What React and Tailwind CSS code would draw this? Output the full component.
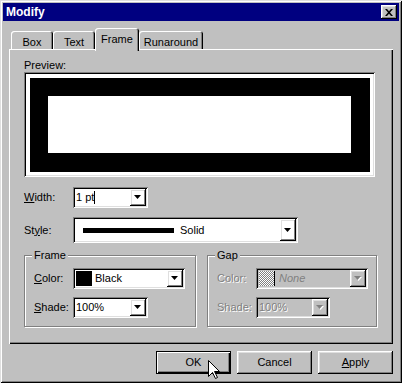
const raised =
  "shadow-[inset_-1px_-1px_0_#000,inset_1px_1px_0_#fff,inset_-2px_-2px_0_#808080,inset_2px_2px_0_#dfdfdf]";
const sunken =
  "shadow-[inset_1px_1px_0_#808080,inset_-1px_-1px_0_#fff,inset_2px_2px_0_#000,inset_-2px_-2px_0_#dfdfdf]";

const Arrow = ({ disabled }) => (
  <svg width="8" height="5" viewBox="0 0 8 5" className="overflow-visible">
    {disabled && <polygon points="1,1 8,1 4.5,5" fill="#fff" />}
    <polygon points="0,0 7,0 3.5,4" fill={disabled ? "#808080" : "#000"} />
  </svg>
);

const Combo = ({ className, disabled, children }) => (
  <div
    className={
      "flex p-[2px] " +
      sunken +
      " " +
      (disabled ? "bg-[#c0c0c0] " : "bg-white ") +
      className
    }
  >
    <div className="flex-1 flex items-center pl-[1px] overflow-hidden whitespace-nowrap">
      {children}
    </div>
    <div className={"w-[16px] shrink-0 flex items-center justify-center " + raised}>
      <Arrow disabled={disabled} />
    </div>
  </div>
);

const Tab = ({ className, selected, children }) => (
  <div
    className={
      "flex justify-center rounded-t-[3px] bg-[#c0c0c0] shadow-[inset_1px_1px_0_#fff,inset_-1px_0_0_#000,inset_-2px_0_0_#808080] " +
      (selected
        ? "relative z-10 h-[23px] -mb-[2px] pt-[3px] "
        : "h-[18px] pt-[3px] ") +
      className
    }
  >
    {children}
  </div>
);

const Group = ({ title, className, children }) => (
  <div
    className={
      "relative h-[72px] border border-[#808080] shadow-[1px_1px_0_#fff,inset_1px_1px_0_#fff] " +
      className
    }
  >
    <span className="absolute -top-[7px] left-[7px] px-[2px] bg-[#c0c0c0] leading-[13px]">
      {title}
    </span>
    <div className="flex flex-col pl-[9px] pt-[12px] gap-[8px]">{children}</div>
  </div>
);

const Label = ({ className, disabled, children }) => (
  <span
    className={
      "shrink-0 leading-[13px] " +
      (disabled ? "text-[#808080] [text-shadow:1px_1px_0_#fff] " : "") +
      className
    }
  >
    {children}
  </span>
);

const Button = ({ isDefault, children }) => (
  <div
    className={
      "w-[75px] h-[23px] flex items-center justify-center " +
      (isDefault
        ? "shadow-[inset_0_0_0_1px_#000,inset_2px_2px_0_#fff,inset_-2px_-2px_0_#000,inset_-3px_-3px_0_#808080]"
        : raised)
    }
  >
    {children}
  </div>
);

export default function App() {
  return (
    <div className="relative w-[402px] h-[383px] bg-[#c0c0c0] p-[3px] flex flex-col text-[11px] text-black font-['Liberation_Sans',Arial,sans-serif] shadow-[inset_1px_1px_0_#dfdfdf,inset_-1px_-1px_0_#000,inset_2px_2px_0_#fff,inset_-2px_-2px_0_#808080]">
      {/* title bar */}
      <div className="h-[18px] bg-[#000080] flex items-center justify-between pl-[3px] pr-[2px]">
        <span className="text-white font-bold text-[12px]">Modify</span>
        <div className={"w-[16px] h-[14px] flex items-center justify-center bg-[#c0c0c0] " + raised}>
          <svg width="8" height="7" viewBox="0 0 8 7">
            <path d="M0 0h2l2 2.2L6 0h2L5 3.5 8 7H6L4 4.8 2 7H0l3-3.5z" fill="#000" />
          </svg>
        </div>
      </div>

      <div className="px-[6px] pt-[7px] flex flex-col">
        {/* tabs */}
        <div className="flex items-end h-[21px] pl-[2px]">
          <Tab className="w-[42px]">Box</Tab>
          <Tab className="w-[42px]">Text</Tab>
          <Tab selected className="w-[44px]">Frame</Tab>
          <Tab className="w-[64px]">Runaround</Tab>
        </div>

        {/* panel */}
        <div className="h-[295px] flex flex-col px-[15px] pt-[10px] shadow-[inset_1px_1px_0_#fff,inset_-1px_-1px_0_#000,inset_-2px_-2px_0_#808080]">
          <Label>Preview:</Label>
          <div className={"w-[351px] h-[105px] bg-white flex items-center justify-center " + sunken}>
            <div className="w-[340px] h-[94px] bg-black flex items-center justify-center">
              <div className="w-[303px] h-[57px] bg-white" />
            </div>
          </div>

          <div className="flex items-center mt-[10px]">
            <Label className="w-[49px]">
              <span className="underline">W</span>idth:
            </Label>
            <Combo className="w-[75px] h-[21px]">
              <span>1 pt</span>
              <span className="w-px h-[13px] bg-black" />
            </Combo>
          </div>

          <div className="flex items-center mt-[9px]">
            <Label className="w-[49px]">
              St<span className="underline">y</span>le:
            </Label>
            <Combo className="w-[225px] h-[26px]">
              <span className="ml-[7px] w-[91px] h-[5px] bg-black" />
              <span className="ml-[6px]">Solid</span>
            </Combo>
          </div>

          <div className="flex mt-[12px]">
            <Group title="Frame" className="w-[172px]">
              <div className="flex items-center">
                <Label className="w-[39px]">
                  <span className="underline">C</span>olor:
                </Label>
                <Combo className="w-[112px] h-[21px]">
                  <span className="w-[16px] h-[15px] bg-black" />
                  <span className="ml-[3px]">Black</span>
                </Combo>
              </div>
              <div className="flex items-center">
                <Label className="w-[39px]">
                  <span className="underline">S</span>hade:
                </Label>
                <Combo className="w-[75px] h-[21px]">
                  <span>100%</span>
                </Combo>
              </div>
            </Group>

            <Group title="Gap" className="w-[170px] ml-[11px]">
              <div className="flex items-center">
                <Label disabled className="w-[39px]">
                  Color:
                </Label>
                <Combo disabled className="w-[112px] h-[21px]">
                  <span className="w-[16px] h-[15px] border-r border-black bg-[conic-gradient(#808080_25%,#fff_0_50%,#808080_0_75%,#fff_0)] bg-[length:2px_2px]" />
                  <span className="ml-[4px] italic text-[#808080]">None</span>
                </Combo>
              </div>
              <div className="flex items-center">
                <Label disabled className="w-[39px]">
                  Shade:
                </Label>
                <Combo disabled className="w-[74px] h-[21px]">
                  <span className="text-[#808080] [text-shadow:1px_1px_0_#fff]">100%</span>
                </Combo>
              </div>
            </Group>
          </div>
        </div>

        {/* buttons */}
        <div className="flex justify-end gap-[6px] mt-[7px]">
          <Button isDefault>OK</Button>
          <Button>Cancel</Button>
          <Button>
            <span>
              <span className="underline">A</span>pply
            </span>
          </Button>
        </div>
      </div>

      {/* mouse pointer */}
      <svg
        width="13"
        height="20"
        viewBox="0 0 13 20"
        className="absolute left-[208px] top-[360px]"
      >
        <path
          d="M0.5 0.5V16.5L4.5 12.5L7.5 18.5L9.5 17.5L6.5 11.5H11.5Z"
          fill="#fff"
          stroke="#000"
          strokeLinejoin="miter"
        />
      </svg>
    </div>
  );
}
